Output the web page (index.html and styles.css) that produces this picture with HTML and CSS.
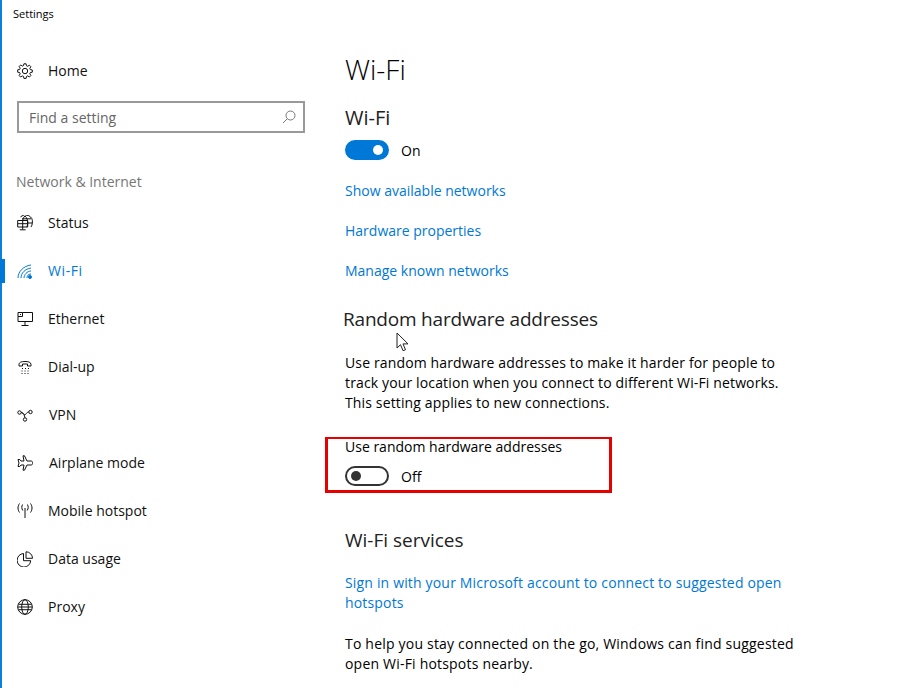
FILE: index.html
```html
<!DOCTYPE html>
<html lang="en">
  <head>
    <meta charset="utf-8">
    <title>Settings</title>
    <link rel="stylesheet" href="styles.css">
  </head>
  <body>
    <div class="window">
      <div class="titlebar">Settings</div>
      <div class="columns">
        <div class="sidebar">
          <div class="nav-item home">
            <svg class="icon" viewBox="0 0 16 16"><path d="M6.900.8h2.200l.4 2 1.200.5 1.700-1.100 1.500 1.500-1.100 1.700.5 1.200 2 .4v2.200l-2 .4-.5 1.200 1.100 1.700-1.500 1.500-1.700-1.100-1.200.5-.4 2H6.900l-.4-2-1.200-.5-1.700 1.100-1.500-1.500 1.100-1.700-.5-1.200-2-.4V6.800l2-.4.5-1.200-1.100-1.700 1.500-1.500 1.700 1.100 1.200-.5z"/><circle cx="8" cy="8" r="2.700"/></svg>
            <span>Home</span>
          </div>
          <div class="search">
            <span>Find a setting</span>
            <svg class="search-icon" viewBox="0 0 14 14"><circle cx="8.500" cy="5.500" r="4.500"/><path d="M5.300 8.700 1 13"/></svg>
          </div>
          <div class="group-label">Network &amp; Internet</div>
          <div class="nav-item">
            <svg class="icon" viewBox="0 0 16 16"><path d="M3.500 1.800A7 7 0 0 1 15.300 8c0 1.500-.5 2.800-1.300 4M8 1C6.500 2.500 6 3.500 5.800 5M8 1c2 2 2.700 4 2.700 7 0 1.500-.3 3-.9 4M5 3.800h9M11 8h4.200"/><path d="M.7 5.500h10v6.500H.7zM.7 8.700h10M5.700 5.500V12M5.700 12v2.500M2.800 14.800h5.800"/></svg>
            <span>Status</span>
          </div>
          <div class="nav-item active">
            <svg class="icon" viewBox="0 0 16 16"><path d="M1 15C1 9 6 3 14 2M4 15c0-5 4-9 10-10M7 15c0-3 3-7 7-7M10 15c0-2 1-4 4-4"/><circle class="dot" cx="13" cy="14" r="1.500"/></svg>
            <span class="wifi-label">Wi-Fi</span>
          </div>
          <div class="nav-item">
            <svg class="icon" viewBox="0 0 16 16"><path d="M5.500 1.500h10v9H1V5.500M8 10.500v3.500M4.500 14.500h7"/><path d="M1 1.500h4.500v4H1zM3 3.500h1"/></svg>
            <span>Ethernet</span>
          </div>
          <div class="nav-item">
            <svg class="icon" viewBox="0 0 16 16"><path d="M2 7V5.500C2 3 5 2.500 8 2.500s6 .5 6 3V7h-3.500V5h-5v2z"/><path class="dots" d="M5 9.500h7M4.500 12h7.500M4.500 14.500h7.500"/></svg>
            <span>Dial-up</span>
          </div>
          <div class="nav-item">
            <svg class="icon" viewBox="0 0 16 16"><circle cx="2.500" cy="5.500" r="1.700"/><circle cx="13.500" cy="5" r="1.700"/><circle cx="8" cy="12.500" r="1.700"/><path d="M4.200 5.500c2.300 0 3.300 3 3.800 5.300M11.800 5C9 5 9 9 7 7.500 6 6.800 6 5.500 4.200 5.500"/></svg>
            <span class="vpn">VPN</span>
          </div>
          <div class="nav-item airplane">
            <svg class="icon" viewBox="0 0 16 16"><path d="M6 .8h1.500L10 6h4c1 0 1.800.8 1.800 2s-.8 2-1.800 2h-4l-2.500 5.200H6L7 10H4l-1.200 1.500H1L2 8 1 4.500h1.800L4 6h3z"/></svg>
            <span>Airplane mode</span>
          </div>
          <div class="nav-item">
            <svg class="icon" viewBox="0 0 16 16"><path d="M8 5v10M5.500 1.500c-1 2-1 4 .3 6M10.500 1.500c1 2 1 4-.3 6M2.500.500c-2 3-2 6 0 9M13.500.500c2 3 2 6 0 9"/></svg>
            <span>Mobile hotspot</span>
          </div>
          <div class="nav-item">
            <svg class="icon" viewBox="0 0 16 16"><path d="M6.500 2.500a6.800 6.800 0 1 0 7.200 7.200H6.500z"/><path d="M9 .8A6.500 6.500 0 0 1 15.500 7.300H9z"/></svg>
            <span>Data usage</span>
          </div>
          <div class="nav-item">
            <svg class="icon" viewBox="0 0 16 16"><circle cx="8" cy="8" r="7.300"/><ellipse cx="8" cy="8" rx="3.300" ry="7.300"/><path d="M1.500 5.300h13M1.500 10.700h13M.7 8h14.600"/></svg>
            <span>Proxy</span>
          </div>
        </div>
        <div class="content">
          <h1>Wi-Fi</h1>
          <h2 class="first">Wi-Fi</h2>
          <div class="toggle-row">
            <span class="toggle on"><span class="knob"></span></span>
            <span>On</span>
          </div>
          <a class="link first-link">Show available networks</a>
          <a class="link">Hardware properties</a>
          <a class="link">Manage known networks</a>
          <h2 class="random">Random hardware addresses</h2>
          <p class="text desc">Use random hardware addresses to make it harder for people to track your location when you connect to different Wi-Fi networks. This setting applies to new connections.</p>
          <div class="highlight">
            <div class="text">Use random hardware addresses</div>
            <div class="toggle-row">
              <span class="toggle"><span class="knob"></span></span>
              <span>Off</span>
            </div>
          </div>
          <h2 class="services">Wi-Fi services</h2>
          <a class="link long">Sign in with your Microsoft account to connect to suggested open hotspots</a>
          <p class="text help">To help you stay connected on the go, Windows can find suggested open Wi-Fi hotspots nearby.</p>
        </div>
      </div>
      <svg class="cursor" viewBox="0 0 14 20"><path d="M1 1v15l3.500-3.300 2.500 6 2.500-1-2.500-5.800h5z"/></svg>
    </div>
  </body>
</html>
```

FILE: styles.css
```css
* {
  box-sizing: border-box;
}

html,
body {
  margin: 0;
  height: 100%;
  overflow: hidden;
}

body {
  background-color: #fff;
  color: #000;
  font-family: "Open Sans", sans-serif;
  font-size: 14px;
}

.window {
  position: relative;
  height: 688px;
  border-left: 2px solid #0f7fdc;
}

.titlebar {
  padding: 6px 0 0 11px;
  height: 47px;
  font-size: 11px;
  line-height: 16px;
}

.columns {
  display: flex;
}

.sidebar {
  width: 343px;
  padding-left: 14px;
}

.nav-item {
  position: relative;
  display: flex;
  align-items: center;
  gap: 15px;
  height: 48px;
  margin-left: -14px;
  padding-left: 15px;
  line-height: 20px;
  color: #111;
}

.nav-item.airplane {
  gap: 16px;
}

.vpn {
  margin-left: 1px;
}

.nav-item.active {
  color: #0078d7;
}

.wifi-label {
  letter-spacing: 0.6px;
}

.nav-item.active::before {
  content: "";
  position: absolute;
  left: -2px;
  top: 12px;
  width: 5px;
  height: 24px;
  background-color: #0078d7;
}

.icon {
  flex: none;
  width: 16px;
  height: 16px;
  fill: none;
  stroke: currentColor;
  stroke-width: 1;
}

.dots {
  stroke-dasharray: 1 2;
}

.dot {
  fill: currentColor;
}

.search {
  display: flex;
  align-items: center;
  justify-content: space-between;
  width: 288px;
  height: 32px;
  margin: 6px 0 0 1px;
  padding: 0 7px 0 10px;
  border: 2px solid #999;
  color: #666;
}

.search-icon {
  width: 14px;
  height: 14px;
  fill: none;
  stroke: #777;
}

.group-label {
  margin-top: 39px;
  height: 27px;
  line-height: 20px;
  color: #767676;
}

.content {
  width: 470px;
  padding-top: 3px;
}

h1 {
  margin: 0;
  font-size: 28px;
  font-weight: 300;
  line-height: 38px;
}

h2 {
  margin: 0;
  font-size: 19px;
  font-weight: 400;
  line-height: 28px;
  color: #222;
}

h2.first {
  margin-top: 16px;
  font-size: 20px;
}

h2.random {
  margin: 24px 0 0 -2px;
  letter-spacing: -0.2px;
}

h2.services {
  margin-top: 33px;
}

.toggle-row {
  display: flex;
  align-items: center;
  gap: 12px;
  height: 20px;
  margin-top: 8px;
}

.toggle {
  display: flex;
  align-items: center;
  width: 44px;
  height: 20px;
  padding: 0 4px;
  border: 2px solid #333;
  border-radius: 10px;
}

.knob {
  width: 10px;
  height: 10px;
  border-radius: 50%;
  background-color: #333;
}

.toggle.on {
  justify-content: flex-end;
  background-color: #0078d7;
  border-color: #0078d7;
}

.toggle.on .knob {
  background-color: #fff;
}

.link {
  display: block;
  margin-top: 20px;
  line-height: 20px;
  color: #0078d7;
}

.link.first-link {
  margin-top: 21px;
}

.link.long {
  margin-top: 19px;
  letter-spacing: 0.17px;
}

.text {
  line-height: 20px;
}

.desc {
  width: 445px;
  margin: 20px 0 0;
  letter-spacing: 0.14px;
}

.help {
  margin: 21px 0 0;
  letter-spacing: 0.2px;
}

.highlight {
  width: 287px;
  height: 56px;
  margin: 24px 0 0 -20px;
  padding-left: 17px;
  border: 3px solid #e60000;
  border-top-width: 2px;
}

.highlight .text {
  margin-top: -2px;
}

.highlight .toggle-row {
  margin-top: 9px;
}

.cursor {
  position: absolute;
  left: 394px;
  top: 332px;
  width: 14px;
  height: 20px;
  fill: #fff;
  stroke: #222;
}
```
